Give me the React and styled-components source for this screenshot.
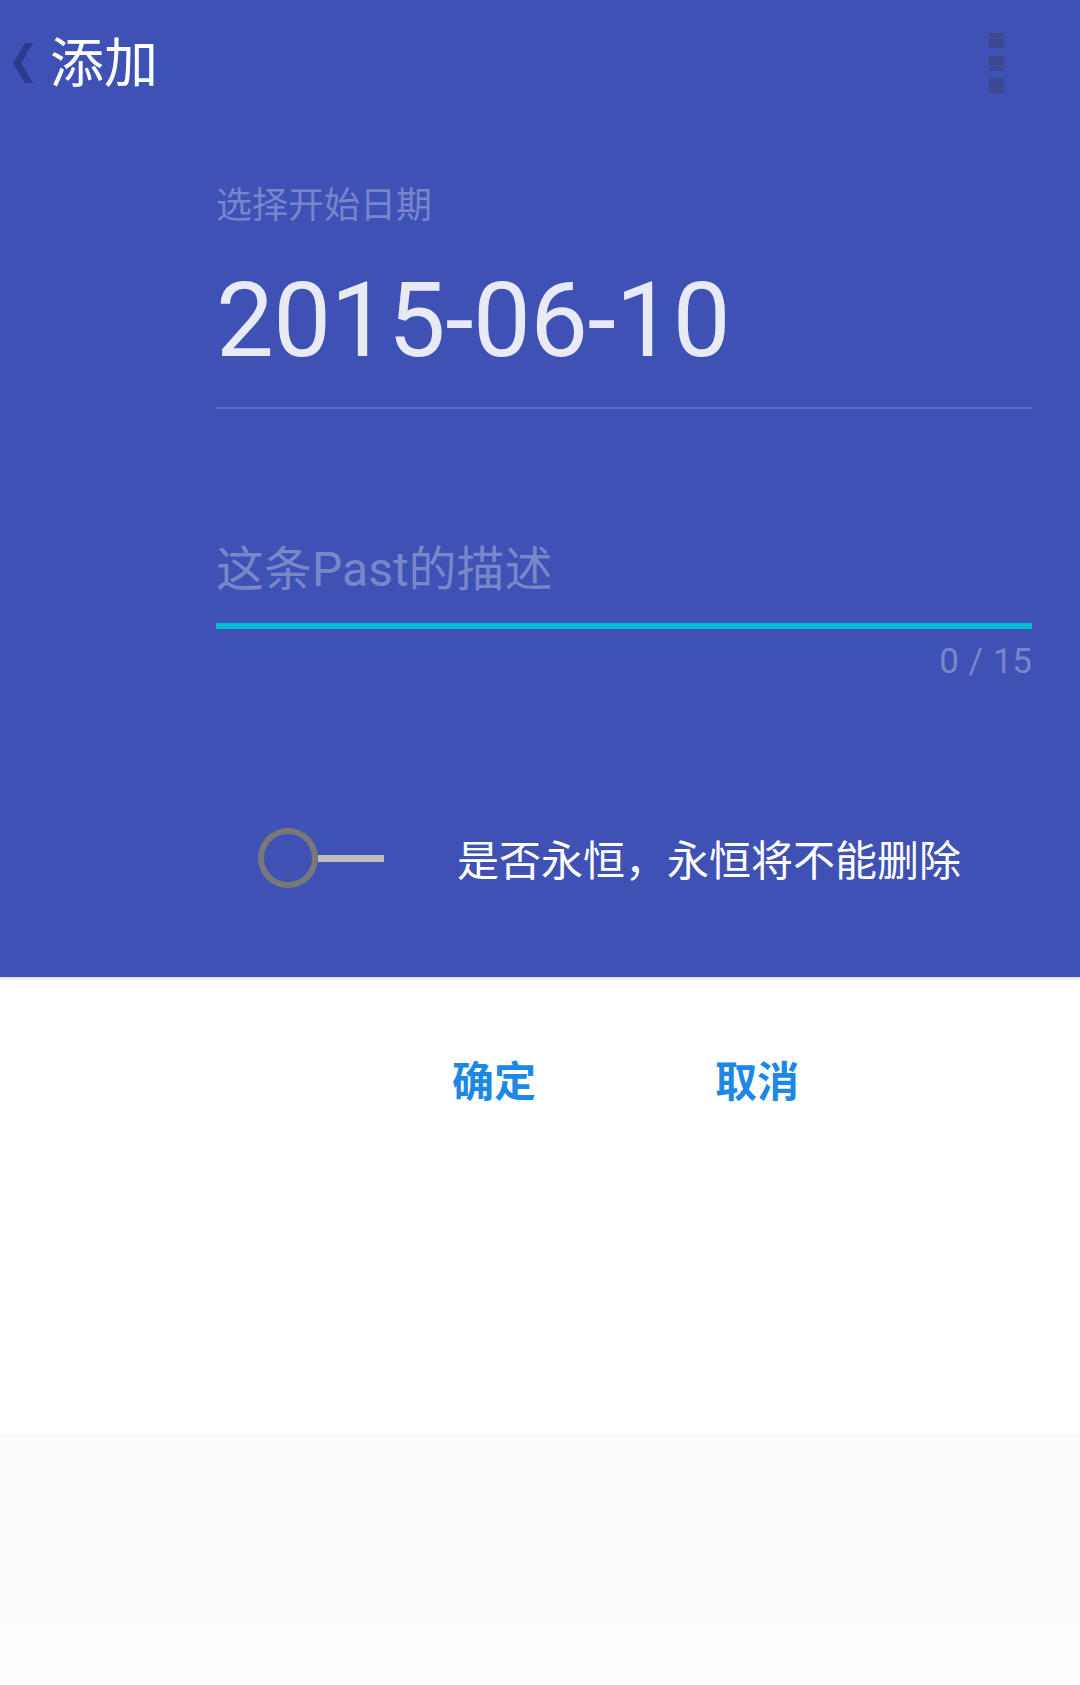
import React, { useState } from "react";
import styled, { createGlobalStyle } from "styled-components";

const GlobalStyle = createGlobalStyle`
  body {
    margin: 0;
    background: #ffffff;
    font-family: Roboto, "Noto Sans CJK SC", sans-serif;
  }
`;

const Page = styled.div`
  width: 1080px;
  min-height: 1685px;
  display: flex;
  flex-direction: column;
`;

const Header = styled.section`
  height: 977px;
  background: #3f51b5;
  box-shadow: 0 2px 2px rgba(0, 0, 0, 0.12);
  display: flex;
  flex-direction: column;
`;

const TopBar = styled.div`
  height: 120px;
  display: flex;
  align-items: center;
  padding: 0 76px 0 13px;
`;

const BackIcon = styled.svg`
  width: 20px;
  height: 40px;
  margin-top: 6px;
  flex-shrink: 0;
`;

const Title = styled.h1`
  margin: 0 0 0 17px;
  font-family: "Noto Sans CJK SC", sans-serif;
  font-weight: 400;
  font-size: 54px;
  line-height: 54px;
  color: #ffffff;
  flex: 1;
`;

const MenuDots = styled.div`
  display: flex;
  flex-direction: column;
  gap: 7.5px;
  margin-top: 6px;
`;

const Dot = styled.span`
  width: 15px;
  height: 15px;
  background: #3d4990;
`;

const Form = styled.div`
  padding: 0 48px 0 216px;
  display: flex;
  flex-direction: column;
`;

const Label = styled.div`
  margin-top: 64px;
  font-family: "Noto Sans CJK SC", sans-serif;
  font-size: 36px;
  line-height: 36px;
  color: #7985cb;
`;

const DateText = styled.div`
  margin-top: 49px;
  font-family: Roboto, sans-serif;
  font-size: 103px;
  line-height: 103px;
  letter-spacing: -0.6px;
  color: #e8eaf6;
`;

const Rule = styled.div`
  margin-top: ${(p) => p.$gap}px;
  height: ${(p) => p.$size}px;
  background: ${(p) => p.$color};
`;

const Placeholder = styled.div`
  margin-top: 137px;
  font-family: Roboto, "Noto Sans CJK SC", sans-serif;
  font-size: 48px;
  line-height: 48px;
  color: #7a86ca;
`;

const Counter = styled.div`
  margin-top: 15px;
  align-self: flex-end;
  font-family: Roboto, sans-serif;
  font-size: 35px;
  line-height: 35px;
  color: #7985cb;
  word-spacing: 1px;
`;

const SwitchRow = styled.div`
  margin-top: 149px;
  height: 60px;
  display: flex;
  align-items: center;
  padding-left: 42px;
`;

const Switch = styled.button`
  display: flex;
  align-items: center;
  padding: 0;
  border: none;
  background: none;
  cursor: pointer;
`;

const Knob = styled.span`
  width: 60px;
  height: 60px;
  box-sizing: border-box;
  border-radius: 50%;
  border: 6px solid ${(p) => (p.$on ? "#00bcd4" : "#787878")};
  background: ${(p) => (p.$on ? "#00bcd4" : "transparent")};
`;

const Track = styled.span`
  width: 66px;
  height: 7px;
  background: #bfbfbf;
`;

const SwitchLabel = styled.span`
  margin-left: 73px;
  font-family: "Noto Sans CJK SC", sans-serif;
  font-size: 42px;
  line-height: 42px;
  color: #ffffff;
`;

const Actions = styled.div`
  height: 456px;
  display: flex;
  align-items: flex-start;
  padding: 81px 0 0 452px;
  box-sizing: border-box;
  gap: 179px;
`;

const ActionButton = styled.button`
  padding: 0;
  border: none;
  background: none;
  font-family: "Noto Sans CJK SC", sans-serif;
  font-weight: 700;
  font-size: 42px;
  line-height: 42px;
  color: #1e88e5;
  cursor: pointer;
`;

const Footer = styled.div`
  flex: 1;
  background: linear-gradient(#fbfbfb, #fdfdfd);
`;

export default function App() {
  const [forever, setForever] = useState(false);

  return (
    <Page>
      <GlobalStyle />
      <Header>
        <TopBar>
          <BackIcon viewBox="0 0 20 40">
            <polygon points="20,0 12,0 0,20 12,40 20,40 8,20" fill="#2b3a8c" />
          </BackIcon>
          <Title>添加</Title>
          <MenuDots>
            <Dot />
            <Dot />
            <Dot />
          </MenuDots>
        </TopBar>
        <Form>
          <Label>选择开始日期</Label>
          <DateText>2015-06-10</DateText>
          <Rule $gap={35} $size={2} $color="#5c6bc0" />
          <Placeholder>这条Past的描述</Placeholder>
          <Rule $gap={29} $size={6} $color="#00bcd4" />
          <Counter>0 / 15</Counter>
          <SwitchRow>
            <Switch onClick={() => setForever(!forever)}>
              <Knob $on={forever} />
              <Track />
            </Switch>
            <SwitchLabel>是否永恒，永恒将不能删除</SwitchLabel>
          </SwitchRow>
        </Form>
      </Header>
      <Actions>
        <ActionButton>确定</ActionButton>
        <ActionButton>取消</ActionButton>
      </Actions>
      <Footer />
    </Page>
  );
}
